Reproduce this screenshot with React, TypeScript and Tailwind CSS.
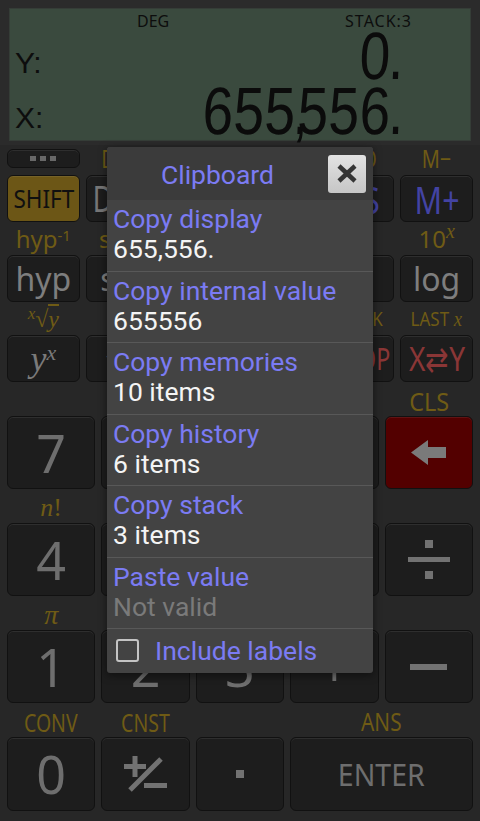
import React from 'react';

const Key = ({ children, className = '' }: { children?: React.ReactNode; className?: string }) => (
  <div
    className={`flex items-center justify-center whitespace-nowrap rounded-[6px] border border-[#111111] leading-none shadow-[inset_0_1px_0_rgba(255,255,255,0.08)] ${className}`}
  >
    {children}
  </div>
);

const Lbl = ({ children, className = '' }: { children?: React.ReactNode; className?: string }) => (
  <div className="flex items-center justify-center overflow-visible whitespace-nowrap">
    <span className={`inline-block text-[#6f5b15] ${className}`}>{children}</span>
  </div>
);

const Seg = ({ text }: { text: string }) => (
  <div className="flex items-start font-['Liberation_Sans',sans-serif] text-[67px] leading-[48px] text-[#0b0b0b]">
    {text.split('').map((c, i) => (
      <span
        key={i}
        className={`inline-block -skew-x-3 scale-x-[0.82] text-center ${
          c === ',' ? 'w-[2px]' : c === '.' ? 'w-[8px]' : 'w-[31px]'
        }`}
      >
        {c}
      </span>
    ))}
  </div>
);

const items = [
  { label: 'Copy display', value: '655,556.' },
  { label: 'Copy internal value', value: '655556' },
  { label: 'Copy memories', value: '10 items' },
  { label: 'Copy history', value: '6 items' },
  { label: 'Copy stack', value: '3 items' },
  { label: 'Paste value', value: 'Not valid', dim: true },
];

const App = () => {
  const keyBg = 'bg-[#1d1d1d]';
  const grey = 'text-[#767676]';
  return (
    <div className="relative h-[821px] w-[480px] overflow-hidden bg-[#272727] font-['Noto_Sans','Open_Sans',sans-serif]">
      {/* display */}
      <div className="h-[145px] bg-[#2b2b2b] px-[9px] pt-[8px]">
        <div className="h-[133px] border border-[#353d37] bg-[#3a4a3e] font-['Liberation_Sans',sans-serif] text-[#0d0d0d]">
          <div className="flex h-[22px] items-center pt-[1px] font-['Noto_Sans',sans-serif] text-[16px]">
            <span className="pl-[127px]">DEG</span>
            <span className="ml-auto pr-[58px] tracking-[1px]">STACK:3</span>
          </div>
          <div className="mt-[1px] flex items-end justify-between">
            <span className="pb-[2px] pl-[5px] text-[30px] leading-[30px]">Y:</span>
            <div className="pr-[74px]">
              <Seg text="0." />
            </div>
          </div>
          <div className="mt-[7px] flex items-end justify-between">
            <span className="pb-[2px] pl-[5px] text-[30px] leading-[30px]">X:</span>
            <div className="pr-[74px]">
              <Seg text="655,556." />
            </div>
          </div>
        </div>
      </div>

      {/* small keys */}
      <div className="grid grid-cols-6 gap-x-[6px] px-[7px]">
        {/* row 0 */}
        <div className="flex h-[27px] items-center">
          <Key className={`h-[19px] w-full ${keyBg} gap-[4px]`}>
            <span className="h-[5px] w-[6px] bg-[#686868]" />
            <span className="h-[5px] w-[6px] bg-[#686868]" />
            <span className="h-[5px] w-[6px] bg-[#686868]" />
          </Key>
        </div>
        <Lbl className="scale-x-[0.8] text-[25px] leading-[27px]">DRG</Lbl>
        <Lbl className="scale-x-[0.8] text-[25px] leading-[27px]">R→P</Lbl>
        <Lbl className="scale-x-[0.8] text-[25px] leading-[27px]">P→R</Lbl>
        <Lbl className="scale-x-[0.8] text-[25px] leading-[27px]">STO</Lbl>
        <Lbl className="scale-x-[0.8] text-[25px] leading-[27px]">M−</Lbl>

        {/* row 1 */}
        <Key className="mt-[3px] h-[47px] bg-[#6c5616]">
          <span className="inline-block scale-x-[0.9] text-[25px] text-[#101010]">SHIFT</span>
        </Key>
        <Key className={`mt-[3px] h-[47px] ${keyBg}`}>
          <span className={`inline-block scale-x-[0.8] text-[36px] ${grey}`}>DRG</span>
        </Key>
        <Key className={`mt-[3px] h-[47px] ${keyBg}`}>
          <span className={`text-[30px] ${grey}`}>(</span>
        </Key>
        <Key className={`mt-[3px] h-[47px] ${keyBg}`}>
          <span className={`text-[30px] ${grey}`}>)</span>
        </Key>
        <Key className={`mt-[3px] h-[47px] ${keyBg}`}>
          <span className="inline-block scale-x-[0.8] text-[38px] text-[#4343a3]">MS</span>
        </Key>
        <Key className={`mt-[3px] h-[47px] ${keyBg}`}>
          <span className="inline-block scale-x-[0.8] text-[38px] text-[#4343a3]">M+</span>
        </Key>

        {/* labels */}
        <div className="col-span-6 grid h-[33px] grid-cols-6 gap-x-[6px] pt-[1px]">
          <Lbl className="text-[24px] leading-[30px]">
            hyp<sup className="text-[15px]">-1</sup>
          </Lbl>
          <Lbl className="text-[24px] leading-[30px]">
            sin<sup className="text-[15px]">-1</sup>
          </Lbl>
          <Lbl className="text-[24px] leading-[30px]">
            cos<sup className="text-[15px]">-1</sup>
          </Lbl>
          <Lbl className="text-[24px] leading-[30px]">
            tan<sup className="text-[15px]">-1</sup>
          </Lbl>
          <Lbl className="text-[24px] leading-[30px]">
            e<sup className="text-[15px]">x</sup>
          </Lbl>
          <Lbl className="text-[24px] leading-[30px]">
            10<sup className="font-['Liberation_Serif',serif] text-[20px] italic">x</sup>
          </Lbl>
        </div>

        {/* row 2 */}
        <Key className={`h-[47px] ${keyBg}`}>
          <span className="text-[32px] text-[#7e7e7e]">hyp</span>
        </Key>
        <Key className={`h-[47px] ${keyBg}`}>
          <span className="text-[32px] text-[#7e7e7e]">sin</span>
        </Key>
        <Key className={`h-[47px] ${keyBg}`}>
          <span className="text-[32px] text-[#7e7e7e]">cos</span>
        </Key>
        <Key className={`h-[47px] ${keyBg}`}>
          <span className="text-[32px] text-[#7e7e7e]">tan</span>
        </Key>
        <Key className={`h-[47px] ${keyBg}`}>
          <span className="text-[32px] text-[#7e7e7e]">ln</span>
        </Key>
        <Key className={`h-[47px] ${keyBg}`}>
          <span className="text-[32px] text-[#7e7e7e]">log</span>
        </Key>

        {/* labels */}
        <div className="col-span-6 grid h-[33px] grid-cols-6 gap-x-[6px]">
          <Lbl className="font-['Liberation_Serif',serif] text-[24px] italic leading-[30px]">
            <span className="align-top text-[17px] leading-[20px]">x</span>
            <span className="not-italic">√</span>
            <span className="border-t-[2px] border-[#6f5b15] leading-[22px]">y</span>
          </Lbl>
          <Lbl className="font-['Liberation_Serif',serif] text-[22px] leading-[30px]">
            <span className="align-top text-[14px] leading-[20px]">3</span>√<i>x</i>
          </Lbl>
          <Lbl className="font-['Liberation_Serif',serif] text-[22px] leading-[30px]">
            <i>x</i>
            <sup className="text-[14px]">2</sup>
          </Lbl>
          <Lbl className="font-['Liberation_Serif',serif] text-[22px] leading-[30px]">
            1/<i>x</i>
          </Lbl>
          <Lbl className="scale-x-[0.85] text-[20px] leading-[30px]">STACK</Lbl>
          <Lbl className="scale-x-[0.85] text-[20px] leading-[30px]">
            LAST<span className="font-['Liberation_Serif',serif] text-[22px] italic"> x</span>
          </Lbl>
        </div>

        {/* row 3 */}
        <Key className={`h-[47px] ${keyBg}`}>
          <span className="font-['Liberation_Serif',serif] text-[36px] italic text-[#7a7a7a]">
            y<sup className="text-[22px]">x</sup>
          </span>
        </Key>
        <Key className={`h-[47px] ${keyBg}`}>
          <span className="font-['Liberation_Serif',serif] text-[32px] text-[#7a7a7a]">
            √<i>x</i>
          </span>
        </Key>
        <Key className={`h-[47px] ${keyBg}`}>
          <span className="font-['Liberation_Serif',serif] text-[32px] text-[#7a7a7a]">
            <i>x</i>
            <sup className="text-[20px]">2</sup>
          </span>
        </Key>
        <Key className={`h-[47px] ${keyBg}`}>
          <span className="font-['Liberation_Serif',serif] text-[32px] text-[#7a7a7a]">
            1/<i>x</i>
          </span>
        </Key>
        <Key className={`h-[47px] ${keyBg}`}>
          <span className="inline-block scale-x-[0.75] text-[31px] text-[#8a3636]">DROP</span>
        </Key>
        <Key className={`h-[47px] ${keyBg}`}>
          <span className="inline-block scale-x-[0.85] text-[33px] text-[#8a3636]">X⇄Y</span>
        </Key>
      </div>

      {/* big keys */}
      <div className="grid grid-cols-5 gap-x-[6px] px-[7px]">
        {/* labels */}
        <div className="col-span-5 grid h-[34px] grid-cols-5 gap-x-[6px] pt-[3px]">
          <div />
          <div />
          <div />
          <div />
          <Lbl className="scale-x-[0.9] text-[26px] leading-[30px]">CLS</Lbl>
        </div>
        {['7', '8', '9', 'EE'].map((d) => (
          <Key key={d} className={`h-[73px] ${keyBg}`}>
            <span className={`text-[#6e6e6e] ${d === 'EE' ? 'text-[34px]' : 'text-[52px]'}`}>{d}</span>
          </Key>
        ))}
        <Key className="h-[73px] bg-[#530000]">
          <svg width="36" height="25" viewBox="0 0 36 25">
            <polygon points="0,12.5 17,0 17,7 35,7 35,18 17,18 17,25" fill="#7a7a7a" />
          </svg>
        </Key>

        <div className="col-span-5 grid h-[34px] grid-cols-5 gap-x-[6px] pt-[3px]">
          <Lbl className="font-['Liberation_Serif',serif] text-[26px] italic leading-[30px]">
            n<span className="not-italic">!</span>
          </Lbl>
          <div />
          <div />
          <div />
          <div />
        </div>
        {['4', '5', '6', '×'].map((d) => (
          <Key key={d} className={`h-[73px] ${keyBg}`}>
            <span className="text-[52px] text-[#6e6e6e]">{d}</span>
          </Key>
        ))}
        <Key className={`h-[73px] ${keyBg}`}>
          <svg width="42" height="40" viewBox="0 0 42 40">
            <rect x="17" y="0" width="8" height="8" fill="#727272" />
            <rect x="0" y="17" width="42" height="5" fill="#727272" />
            <rect x="17" y="31" width="8" height="8" fill="#727272" />
          </svg>
        </Key>

        <div className="col-span-5 grid h-[34px] grid-cols-5 gap-x-[6px] pt-[3px]">
          <Lbl className="font-['Liberation_Serif',serif] text-[28px] italic leading-[30px]">π</Lbl>
          <div />
          <div />
          <div />
          <div />
        </div>
        {['1', '2', '3', '+'].map((d) => (
          <Key key={d} className={`h-[73px] ${keyBg}`}>
            <span className="text-[52px] text-[#6e6e6e]">{d}</span>
          </Key>
        ))}
        <Key className={`h-[73px] ${keyBg}`}>
          <span className="h-[6px] w-[37px] bg-[#727272]" />
        </Key>

        <div className="col-span-5 grid h-[34px] grid-cols-5 gap-x-[6px] pt-[3px]">
          <Lbl className="scale-x-[0.75] text-[26px] leading-[30px]">CONV</Lbl>
          <Lbl className="scale-x-[0.75] text-[26px] leading-[30px]">CNST</Lbl>
          <div />
          <div className="col-span-2">
            <Lbl className="scale-x-[0.8] text-[26px] leading-[30px]">ANS</Lbl>
          </div>
        </div>
        <Key className={`h-[74px] ${keyBg}`}>
          <span className="text-[52px] text-[#6e6e6e]">0</span>
        </Key>
        <Key className={`h-[74px] ${keyBg}`}>
          <svg width="44" height="36" viewBox="0 0 44 36">
            <rect x="0" y="8" width="22" height="5" fill="#727272" />
            <rect x="8.5" y="0" width="5" height="21" fill="#727272" />
            <line x1="6" y1="34" x2="37" y2="3" stroke="#727272" strokeWidth="5" />
            <rect x="20" y="27" width="23" height="5" fill="#727272" />
          </svg>
        </Key>
        <Key className={`h-[74px] ${keyBg}`}>
          <span className="h-[8px] w-[8px] bg-[#727272]" />
        </Key>
        <Key className={`col-span-2 h-[74px] ${keyBg}`}>
          <span className="inline-block scale-x-[0.92] text-[31px] text-[#6e6e6e]">ENTER</span>
        </Key>
      </div>

      {/* clipboard dialog */}
      <div className="absolute left-[107px] top-[147px] w-[266px] overflow-hidden rounded-[3px] bg-[#434343] font-['Roboto',sans-serif] shadow-[0_2px_8px_rgba(0,0,0,0.5)]">
        <div className="flex h-[53px] items-center bg-[#3b3b3b] pr-[7px]">
          <div className="flex-1 pt-[2px] text-center text-[26.5px] text-[#7b7bf3]">Clipboard</div>
          <div className="flex h-[38px] w-[38px] items-center justify-center rounded-[3px] bg-gradient-to-b from-[#e2e2e2] to-[#c6c6c6]">
            <svg width="22" height="19" viewBox="0 0 22 19">
              <line x1="3" y1="2" x2="19" y2="17" stroke="#353535" strokeWidth="4.5" />
              <line x1="19" y1="2" x2="3" y2="17" stroke="#353535" strokeWidth="4.5" />
            </svg>
          </div>
        </div>
        {items.map((it) => (
          <div key={it.label} className="h-[71.5px] border-b border-[#585858] px-[6px] pt-[4px] text-[26.5px] leading-[30px]">
            <div className="text-[#7b7bf3]">{it.label}</div>
            <div className={it.dim ? 'text-[#7a7a7a]' : 'text-[#f4f4f4]'}>{it.value}</div>
          </div>
        ))}
        <div className="flex h-[43.5px] items-center pl-[9px]">
          <span className="h-[23px] w-[23px] rounded-[3px] border-[2.5px] border-[#c4c4c4]" />
          <span className="ml-[16px] text-[26.5px] text-[#7b7bf3]">Include labels</span>
        </div>
      </div>
    </div>
  );
};

export default App;
